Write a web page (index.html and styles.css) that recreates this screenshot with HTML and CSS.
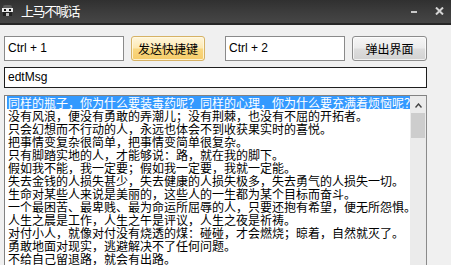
FILE: index.html
```html
<!DOCTYPE html>
<html>
<head>
<meta charset="utf-8">
<link rel="stylesheet" href="styles.css">
</head>
<body>
<div class="window">
  <div class="titlebar">
    <svg class="app-icon" width="11" height="11" viewBox="0 0 11 11">
      <rect x="1" y="0" width="9" height="4" rx="2" fill="#5a5a5a"/>
      <rect x="0" y="3" width="11" height="4" fill="#e8e8e8"/>
      <rect x="2" y="4" width="2" height="2" fill="#111"/>
      <rect x="7" y="4" width="2" height="2" fill="#111"/>
      <rect x="1" y="7" width="9" height="4" fill="#222"/>
      <rect x="4" y="8" width="3" height="3" fill="#bbb"/>
    </svg>
    <span class="title">上马不喊话</span>
    <span class="spacer"></span>
    <span class="tb-min"></span>
    <svg class="tb-close" width="9" height="8" viewBox="0 0 9 8">
      <path d="M1 0.5 L8 7.5 M8 0.5 L1 7.5" stroke="#d4d4d4" stroke-width="2"/>
    </svg>
  </div>
  <div class="content">
    <div class="row">
      <div class="textbox">Ctrl + 1</div>
      <div class="btn btn-hot">发送快捷键</div>
      <div class="textbox tb2">Ctrl + 2</div>
      <div class="btn">弹出界面</div>
    </div>
    <div class="msg">edtMsg</div>
    <div class="list">
      <div class="list-items">
        <div class="item sel">同样的瓶子，你为什么要装毒药呢？同样的心理，你为什么要充满着烦恼呢？</div>
        <div class="item">没有风浪，便没有勇敢的弄潮儿；没有荆棘，也没有不屈的开拓者。</div>
        <div class="item">只会幻想而不行动的人，永远也体会不到收获果实时的喜悦。</div>
        <div class="item">把事情变复杂很简单，把事情变简单很复杂。</div>
        <div class="item">只有脚踏实地的人，才能够说：路，就在我的脚下。</div>
        <div class="item">假如我不能，我一定要；假如我一定要，我就一定能。</div>
        <div class="item">失去金钱的人损失甚少，失去健康的人损失极多，失去勇气的人损失一切。</div>
        <div class="item">生命对某些人来说是美丽的，这些人的一生都为某个目标而奋斗。</div>
        <div class="item">一个最困苦、最卑贱、最为命运所屈辱的人，只要还抱有希望，便无所怨惧。</div>
        <div class="item">人生之晨是工作，人生之午是评议，人生之夜是祈祷。</div>
        <div class="item">对付小人，就像对付没有烧透的煤：碰碰，才会燃烧；晾着，自然就灭了。</div>
        <div class="item">勇敢地面对现实，逃避解决不了任何问题。</div>
        <div class="item">不给自己留退路，就会有出路。</div>
      </div>
      <div class="scrollbar">
        <svg class="arrow" width="7" height="5" viewBox="0 0 7 5">
          <path d="M0.5 4.5 L3.5 1 L6.5 4.5" fill="none" stroke="#444" stroke-width="1.4"/>
        </svg>
        <div class="thumb"></div>
      </div>
    </div>
  </div>
</div>
</body>
</html>
```
FILE: styles.css
```css
* { box-sizing: border-box; }
html, body {
  margin: 0;
  padding: 0;
  width: 451px;
  height: 265px;
  overflow: hidden;
  background: #f0f0f0;
}
.window {
  display: flex;
  flex-direction: column;
  height: 265px;
  font-family: "Liberation Sans", "Noto Sans CJK SC", sans-serif;
}
.titlebar {
  height: 25px;
  flex: none;
  display: flex;
  align-items: center;
  padding: 0 7px 2px 2px;
  background: linear-gradient(#303030, #3c3c3c 50%, #464646 100%);
  border-bottom: 2px solid #262626;
}
.app-icon { flex: none; }
.title {
  margin-left: 8px;
  color: #fff;
  font-family: "Noto Sans CJK SC", sans-serif;
  font-size: 13px;
  letter-spacing: -1.4px;
}
.spacer { flex: 1; }
.tb-min {
  width: 6px;
  height: 2px;
  background: #c8c8c8;
  margin-top: 3px;
  margin-right: 18px;
}
.tb-close { flex: none; }
.content {
  flex: 1;
  display: flex;
  flex-direction: column;
  padding: 11px 0 0 4px;
  min-height: 0;
}
.row {
  display: flex;
  height: 25px;
  flex: none;
}
.textbox {
  width: 120px;
  height: 25px;
  background: #fff;
  border: 1px solid #8a8a8a;
  font-size: 12px;
  line-height: 15px;
  padding: 4px 0 0 3px;
  color: #000;
}
.tb2 { margin-left: 20px; }
.btn {
  width: 75px;
  height: 25px;
  margin-left: 7px;
  border: 1px solid #8c8c8c;
  border-radius: 3px;
  background: linear-gradient(#f6f6f6, #ebebeb 48%, #dddddd 52%, #d2d2d2);
  font-family: "Noto Sans CJK SC", sans-serif;
  font-size: 12px;
  display: flex;
  align-items: center;
  justify-content: center;
  color: #000;
  box-shadow: inset 0 0 0 1px rgba(255,255,255,0.7);
}
.btn-hot {
  width: 74px;
  border-color: #d6b265;
  background: linear-gradient(#fff6dc, #fde9b3 48%, #f9d77f 52%, #f6cc6a);
  box-shadow: inset 0 0 0 1px rgba(255,250,230,0.8);
}
.msg {
  margin-top: 6px;
  width: 423px;
  height: 21px;
  flex: none;
  background: #fff;
  border: 1px solid #1e1e1e;
  font-size: 12px;
  line-height: 15px;
  padding: 2px 0 0 3px;
}
.list {
  margin-top: 7px;
  width: 423px;
  flex: 1;
  min-height: 0;
  display: flex;
  background: #fff;
  border: 1px solid #828282;
  border-bottom: none;
  border-right: 1px solid #8a8a8a;
  overflow: hidden;
}
.list-items {
  flex: 1;
  min-width: 0;
  overflow: hidden;
  padding: 0 0 0 2px;
}
.item {
  height: 13px;
  line-height: 13px;
  white-space: nowrap;
  font-family: "Noto Sans CJK SC", sans-serif;
  font-size: 12px;
  color: #000;
  padding-left: 1px;
}
.item.sel {
  background: #3399ff;
  color: #fff;
}
.scrollbar {
  width: 16px;
  flex: none;
  background: #ebebeb;
  display: flex;
  flex-direction: column;
  align-items: center;
}
.arrow { margin-top: 7px; }
.thumb {
  margin-top: 5px;
  width: 14px;
  height: 25px;
  background: #cdcdcd;
}
```
